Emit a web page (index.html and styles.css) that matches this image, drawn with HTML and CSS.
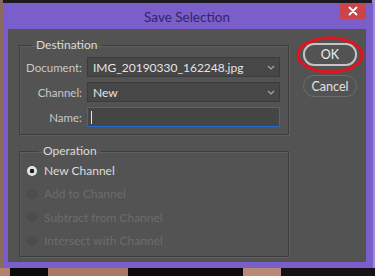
FILE: index.html
```html
<!DOCTYPE html>
<html lang="en">

<head>
  <meta charset="UTF-8">
  <meta name="viewport" content="width=device-width, initial-scale=1.0">
  <title>Save Selection</title>
  <link rel="stylesheet" href="styles.css">
</head>

<body>
  <div class="window">
    <div class="title-bar">
      <span class="title">Save Selection</span>
      <button class="close-btn" type="button">
        <svg width="10" height="10" viewBox="0 0 10 10"><path d="M1.5 1.5 L8.5 8.5 M8.5 1.5 L1.5 8.5" stroke="#fff" stroke-width="1.8" stroke-linecap="round"/></svg>
      </button>
    </div>

    <div class="content">
      <div class="main-col">
        <fieldset class="group">
          <legend>Destination</legend>
          <div class="form-row">
            <label for="document">Document:</label>
            <div class="select">
              <span id="document">IMG_20190330_162248.jpg</span>
              <svg class="chevron" width="8" height="5" viewBox="0 0 8 5"><polyline points="1,1 4,4 7,1" fill="none" stroke="#a8a8a8" stroke-width="1.2"/></svg>
            </div>
          </div>
          <div class="form-row">
            <label for="channel">Channel:</label>
            <div class="select">
              <span id="channel">New</span>
              <svg class="chevron" width="8" height="5" viewBox="0 0 8 5"><polyline points="1,1 4,4 7,1" fill="none" stroke="#a8a8a8" stroke-width="1.2"/></svg>
            </div>
          </div>
          <div class="form-row">
            <label for="name">Name:</label>
            <div class="text-input" id="name"><span class="caret"></span></div>
          </div>
        </fieldset>

        <fieldset class="group operation">
          <legend>Operation</legend>
          <div class="radio-row">
            <span class="radio checked"></span>
            <span>New Channel</span>
          </div>
          <div class="radio-row disabled">
            <span class="radio"></span>
            <span>Add to Channel</span>
          </div>
          <div class="radio-row disabled">
            <span class="radio"></span>
            <span>Subtract from Channel</span>
          </div>
          <div class="radio-row disabled">
            <span class="radio"></span>
            <span>Intersect with Channel</span>
          </div>
        </fieldset>
      </div>

      <div class="button-col">
        <button class="btn btn-ok" type="button">OK</button>
        <button class="btn btn-cancel" type="button">Cancel</button>
        <!-- red marker drawn around the OK button -->
        <svg class="highlight" width="68" height="38" viewBox="0 0 68 38">
          <ellipse cx="34" cy="19" rx="32" ry="17" fill="none" stroke="#e8101c" stroke-width="3"/>
        </svg>
      </div>
    </div>
  </div>
  <div class="backdrop-strip">
    <span class="seg seg-a"></span>
    <span class="seg seg-b"></span>
    <span class="seg seg-c"></span>
    <span class="seg seg-b2"></span>
    <span class="seg seg-d"></span>
    <span class="seg seg-b3"></span>
  </div>
</body>

</html>
```

FILE: styles.css
```css
body {
  margin: 0;
  padding: 0;
  width: 375px;
  height: 276px;
  overflow: hidden;
  background: linear-gradient(90deg, #8a6a5e 0, #8a6a5e 3px, #1d1a1f 3px, #1d1a1f 372px, #9c8ad8 372px);
  font-family: Lato, "Noto Sans", Arial, sans-serif;
  font-size: 12px;
}

.window {
  margin: 3px 0 0 3px;
  width: 370px;
  height: 265px;
  background: #7a5fcb;
  box-sizing: border-box;
  padding: 0 7px 6px 5px;
  display: flex;
  flex-direction: column;
}

.title-bar {
  height: 26px;
  display: grid;
  grid-template-columns: 1fr auto 1fr;
  align-items: center;
}

.title {
  grid-column: 2;
  font-size: 13.5px;
  color: #33256a;
  padding-top: 1px;
}

.close-btn {
  grid-column: 3;
  justify-self: end;
  align-self: start;
  width: 26px;
  height: 16px;
  padding: 0;
  border: none;
  background: #c9454a;
  display: flex;
  align-items: center;
  justify-content: center;
}

.content {
  flex: 1;
  background: #535353;
  display: flex;
  padding: 9px 9px 0 11px;
  gap: 14px;
}

.main-col {
  width: 270px;
}

.group {
  margin: 0;
  padding: 5px 8px 7px 0;
  border: 1px solid #3e3e3e;
  box-shadow: 1px 1px 0 #5f5f5f, inset 1px 1px 0 #5f5f5f;
}

.group legend {
  margin-left: 12px;
  padding: 0 4px;
  line-height: 14px;
  color: #dadada;
}

.operation {
  margin-top: 9px;
  padding: 1px 8px 4px 7px;
}

.form-row {
  display: flex;
  align-items: center;
  gap: 5px;
  height: 20px;
}

.form-row + .form-row {
  margin-top: 5px;
}

.form-row label {
  width: 62px;
  text-align: right;
  font-size: 11.5px;
  color: #c9c9c9;
}

.select {
  flex: 1;
  height: 20px;
  box-sizing: border-box;
  background: #474747;
  border: 1px solid #3c3c3c;
  display: flex;
  align-items: center;
  justify-content: space-between;
  padding: 0 4px 0 5px;
  color: #e4e4e4;
}

.text-input {
  flex: 1;
  height: 20px;
  box-sizing: border-box;
  background: #454545;
  border: 1px solid #2369d0;
  display: flex;
  align-items: center;
  padding-left: 3px;
}

.caret {
  width: 1px;
  height: 13px;
  background: #e6e6e6;
}

.radio-row {
  height: 23.33px;
  display: flex;
  align-items: center;
  gap: 7px;
  color: #dcdcdc;
}

.radio-row.disabled {
  color: #6c6c6c;
}

.radio {
  width: 10px;
  height: 10px;
  border-radius: 50%;
  box-sizing: border-box;
  background: #4d4d4d;
  border: 1px solid #4a4a4a;
}

.radio.checked {
  background: radial-gradient(circle, #1e1e1e 0, #1e1e1e 2px, #e4e4e4 2.6px);
  border: none;
}

.button-col {
  position: relative;
  width: 54px;
  padding-top: 5px;
  display: flex;
  flex-direction: column;
  gap: 9px;
}

.btn {
  width: 54px;
  height: 22px;
  border-radius: 11px;
  background: #535353;
  font-family: inherit;
  font-size: 12.5px;
  padding: 0;
  color: #f0f0f0;
}

.btn-ok {
  height: 23px;
  border: 2px solid #c4c4c4;
}

.btn-cancel {
  border: 1.5px solid #6c6c6c;
  color: #e2e2e2;
}

.highlight {
  position: absolute;
  left: -7px;
  top: -2px;
}

.backdrop-strip {
  display: flex;
  height: 8px;
}

.seg {
  display: block;
  height: 100%;
}

.seg-a { width: 10px; background: #b58270; }
.seg-b { width: 38px; background: #0c0a0c; }
.seg-c { width: 80px; background: #a87766; }
.seg-b2 { width: 115px; background: #10090b; }
.seg-d { width: 38px; background: #b88a78; }
.seg-b3 { flex: 1; background: #161216; }
```
